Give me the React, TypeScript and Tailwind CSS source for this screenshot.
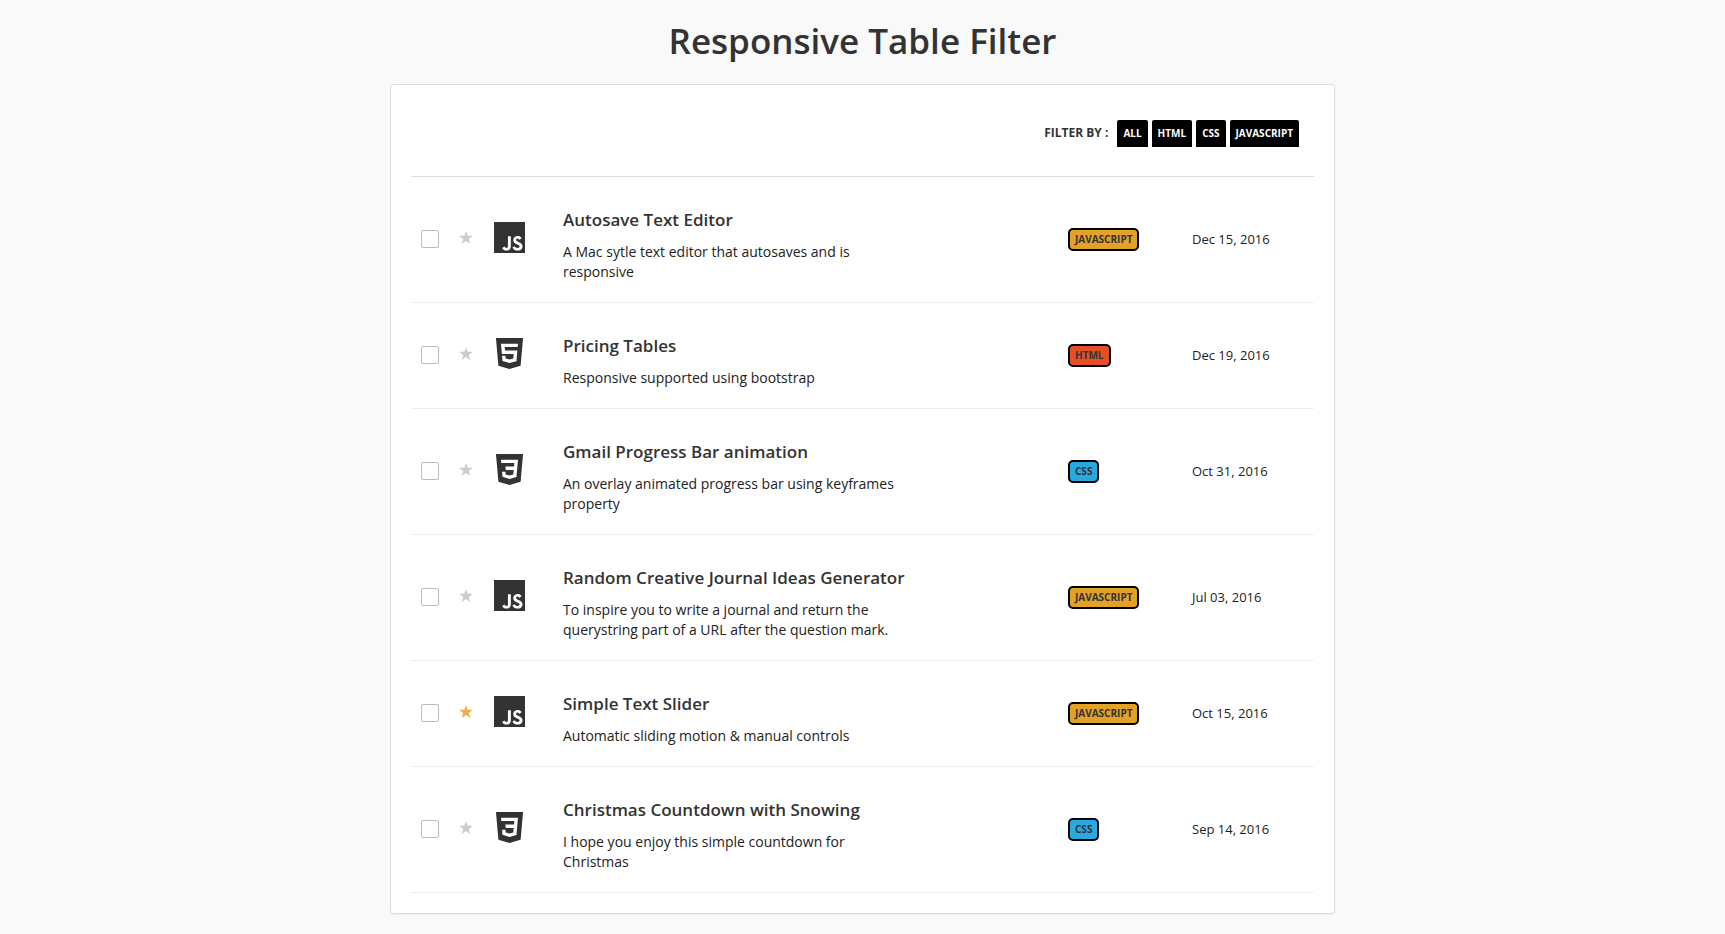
import { useState } from "react";

type Tech = "JAVASCRIPT" | "HTML" | "CSS";

interface Item {
  title: string;
  description: string;
  tech: Tech;
  date: string;
  starred: boolean;
}

const ITEMS: Item[] = [
  {
    title: "Autosave Text Editor",
    description: "A Mac sytle text editor that autosaves and is responsive",
    tech: "JAVASCRIPT",
    date: "Dec 15, 2016",
    starred: false,
  },
  {
    title: "Pricing Tables",
    description: "Responsive supported using bootstrap",
    tech: "HTML",
    date: "Dec 19, 2016",
    starred: false,
  },
  {
    title: "Gmail Progress Bar animation",
    description: "An overlay animated progress bar using keyframes property",
    tech: "CSS",
    date: "Oct 31, 2016",
    starred: false,
  },
  {
    title: "Random Creative Journal Ideas Generator",
    description:
      "To inspire you to write a journal and return the querystring part of a URL after the question mark.",
    tech: "JAVASCRIPT",
    date: "Jul 03, 2016",
    starred: false,
  },
  {
    title: "Simple Text Slider",
    description: "Automatic sliding motion & manual controls",
    tech: "JAVASCRIPT",
    date: "Oct 15, 2016",
    starred: true,
  },
  {
    title: "Christmas Countdown with Snowing",
    description: "I hope you enjoy this simple countdown for Christmas",
    tech: "CSS",
    date: "Sep 14, 2016",
    starred: false,
  },
];

const FILTERS: ("ALL" | Tech)[] = ["ALL", "HTML", "CSS", "JAVASCRIPT"];

const BADGE_COLORS: Record<Tech, string> = {
  JAVASCRIPT: "bg-[#e3a127]",
  HTML: "bg-[#e44f26]",
  CSS: "bg-[#29a9df]",
};

const LOGO_PATHS: Record<Tech, string> = {
  JAVASCRIPT:
    "M0 0h24v24H0V0zm22.034 18.276c-.175-1.095-.888-2.015-3.003-2.873-.736-.345-1.554-.585-1.797-1.14-.091-.33-.105-.51-.046-.705.15-.646.915-.84 1.515-.66.39.12.75.42.976.9 1.034-.676 1.034-.676 1.755-1.125-.27-.42-.404-.601-.586-.78-.63-.705-1.469-1.065-2.834-1.034l-.705.089c-.676.165-1.32.525-1.71 1.005-1.14 1.291-.811 3.541.569 4.471 1.365 1.02 3.361 1.244 3.616 2.205.24 1.17-.87 1.545-1.966 1.41-.811-.18-1.26-.586-1.755-1.336l-1.83 1.051c.21.48.45.689.81 1.109 1.74 1.756 6.09 1.666 6.871-1.004.029-.09.24-.705.074-1.65l.046.067zm-8.983-7.245h-2.248c0 1.938-.009 3.864-.009 5.805 0 1.232.063 2.363-.138 2.711-.33.689-1.18.601-1.566.48-.396-.196-.597-.466-.83-.855-.063-.105-.11-.196-.127-.196l-1.825 1.125c.305.63.75 1.172 1.324 1.517.855.51 2.004.675 3.207.405.783-.226 1.458-.691 1.811-1.411.51-.93.402-2.07.397-3.346.012-2.054 0-4.109 0-6.179l.004-.056z",
  HTML: "M1.5 0h21l-1.91 21.563L11.977 24l-8.564-2.438L1.5 0zm7.031 9.75l-.232-2.718 10.059.003.23-2.622L5.412 4.41l.698 8.01h9.126l-.326 3.426-2.91.804-2.955-.81-.188-2.11H6.248l.33 4.171L12 19.351l5.379-1.443.744-8.157H8.531z",
  CSS: "M1.5 0h21l-1.91 21.563L11.977 24l-8.565-2.438L1.5 0zm17.09 4.413L5.41 4.41l.213 2.622 10.125.002-.255 2.716h-6.64l.24 2.573h6.182l-.366 3.523-2.91.804-2.956-.81-.188-2.11h-2.61l.29 3.855L12 19.288l5.373-1.53L18.59 4.414z",
};

function TechLogo({ tech }: { tech: Tech }) {
  return (
    <svg viewBox="0 0 24 24" aria-hidden="true" className="mb-1 block size-[31px] fill-[#333]">
      <path d={LOGO_PATHS[tech]} />
    </svg>
  );
}

function StarButton({ title, initial }: { title: string; initial: boolean }) {
  const [on, setOn] = useState(initial);
  return (
    <button
      type="button"
      aria-label={`Star ${title}`}
      aria-pressed={on}
      onClick={() => setOn(!on)}
      className={on ? "mb-1 block text-[#f0ad4e]" : "mb-1 block text-[#ccc]"}
    >
      <svg viewBox="0 0 14 13" aria-hidden="true" className="block h-[13px] w-[14px] fill-current">
        <path d="M7 0l1.65 4.75H14L9.7 7.9l1.6 5L7 9.9l-4.3 3 1.6-5L0 4.75h5.35z" />
      </svg>
    </button>
  );
}

function ItemRow({ item }: { item: Item }) {
  return (
    <tr className="border-b border-[#eee]">
      <td className="w-[45px] pb-0.5 pl-2.5">
        <input
          type="checkbox"
          aria-label={`Select ${item.title}`}
          className="block size-[18px] appearance-none rounded-xs border border-[#bbb] bg-white checked:bg-[#333]"
        />
      </td>
      <td className="w-[38px] pl-[3px]">
        <StarButton title={item.title} initial={item.starred} />
      </td>
      <td className="w-[69px]">
        <TechLogo tech={item.tech} />
      </td>
      <td className="pt-[31px] pb-5">
        <h2 className="mb-2.5 text-[17px] leading-6 font-semibold">{item.title}</h2>
        <p className="max-w-[342px] text-sm leading-5 text-[#222]">{item.description}</p>
      </td>
      <td className="w-[124px]">
        <span
          className={`block w-fit rounded-[5px] border-2 border-black px-[5px] text-[10px] leading-[19px] font-bold ${BADGE_COLORS[item.tech]}`}
        >
          {item.tech}
        </span>
      </td>
      <td className="w-[122px] pb-0.5 text-[13px] leading-5 text-[#222]">{item.date}</td>
    </tr>
  );
}

export default function App() {
  const [filter, setFilter] = useState<"ALL" | Tech>("ALL");
  const visible = ITEMS.filter((item) => filter === "ALL" || item.tech === filter);

  return (
    <div className="min-h-screen bg-[#f9f9f9] pb-5 font-['Open_Sans',sans-serif] text-[#333]">
      <h1 className="pt-[15px] pb-[17px] text-center text-[35px] leading-[52px] font-semibold">
        Responsive Table Filter
      </h1>
      <main className="mx-auto w-full max-w-[945px] rounded-sm border border-[#ddd] bg-white px-5 pb-5 shadow-[0_1px_1px_rgba(0,0,0,0.05)]">
        <div className="flex items-start justify-end gap-[9px] border-b border-[#ddd] px-[15px] pt-[35px] pb-[29px]">
          <span className="text-xs leading-[26px] font-bold">FILTER BY :</span>
          <div className="flex gap-1">
            {FILTERS.map((name) => (
              <button
                key={name}
                type="button"
                onClick={() => setFilter(name)}
                className="rounded-t-xs bg-black px-1.5 pt-1 pb-[5px] text-[10px] leading-[18px] font-bold text-white"
              >
                {name}
              </button>
            ))}
          </div>
        </div>
        <table className="w-full border-collapse text-left align-middle">
          <tbody>
            {visible.map((item) => (
              <ItemRow key={item.title} item={item} />
            ))}
          </tbody>
        </table>
      </main>
    </div>
  );
}
